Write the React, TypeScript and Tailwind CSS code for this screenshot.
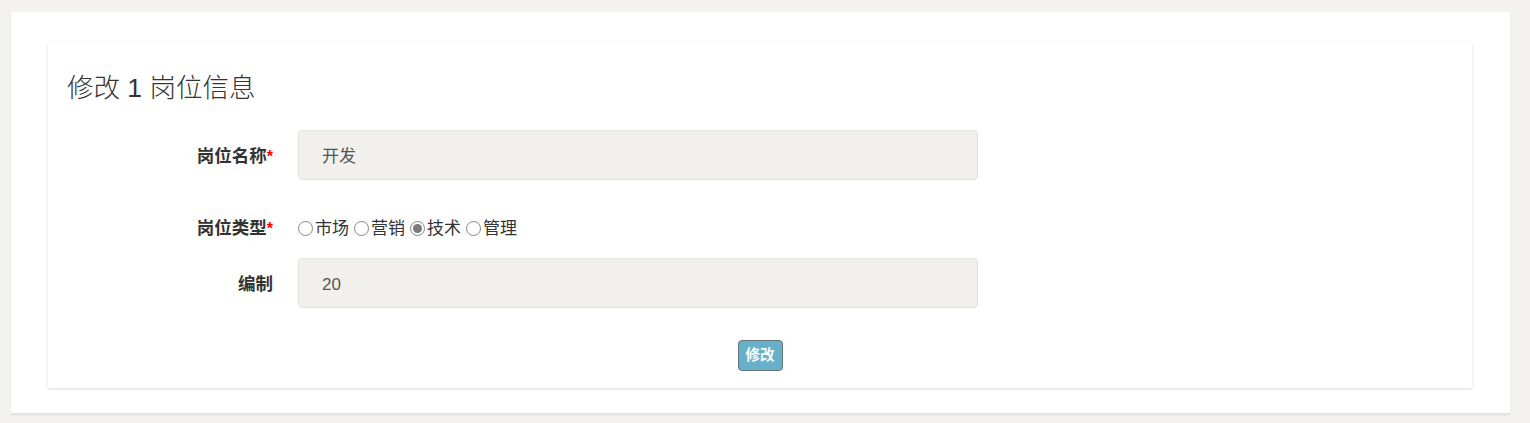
import { useState } from "react";

const font = { fontFamily: '"Liberation Sans", "Noto Sans CJK SC", sans-serif' };

const types = ["市场", "营销", "技术", "管理"];

const Radio = ({ checked }: { checked: boolean }) => (
  <span className="inline-flex w-[15px] h-[15px] rounded-full border border-[#858585] bg-white items-center justify-center shrink-0">
    {checked && <span className="w-[9px] h-[9px] rounded-full bg-[#7a7a7a]" />}
  </span>
);

const Label = ({ text, required }: { text: string; required?: boolean }) => (
  <div className="w-[226px] pr-[1px] pt-[3px] text-right text-[17.5px] font-bold text-[#333]">
    {text}
    {required && <span className="text-[#f00] text-[16px]">*</span>}
  </div>
);

export default function App() {
  const [kind, setKind] = useState("技术");

  return (
    <div className="min-h-screen bg-[#f3f2ef] pt-[12px]" style={font}>
      <div className="ml-[11px] w-[1499px] bg-white pt-[31px] pl-[37px] pr-[38px] pb-[25px] shadow-[0_2px_2px_rgba(0,0,0,0.08)]">
        <div className="bg-white shadow-[0_1px_3px_rgba(0,0,0,0.14)] pt-[30px] pb-[17px]">
          <h2 className="pl-[19px] text-[26.5px] leading-[30px] font-light text-[#333]">修改 1 岗位信息</h2>

          <form className="mt-[27px]" onSubmit={(e) => e.preventDefault()}>
            <div className="flex items-center">
              <Label text="岗位名称" required />
              <div className="ml-[24px] w-[680px] h-[50px] rounded-[4px] border border-[#e4e2df] bg-[#f2f0ed] pl-[23px] pt-[3px] flex items-center text-[17px] text-[#555]">
                开发
              </div>
            </div>

            <div className="flex items-center mt-[32px] h-[30px]">
              <Label text="岗位类型" required />
              <div className="ml-[24px] pt-[3px] flex items-center text-[17px] text-[#333]">
                {types.map((t, i) => (
                  <label
                    key={t}
                    onClick={() => setKind(t)}
                    className={`flex items-center gap-[2px] cursor-pointer ${i > 0 ? "ml-[5px]" : ""}`}
                  >
                    <Radio checked={kind === t} />
                    <span>{t}</span>
                  </label>
                ))}
              </div>
            </div>

            <div className="flex items-center mt-[16px]">
              <Label text="编制" />
              <div className="ml-[24px] w-[680px] h-[50px] rounded-[4px] border border-[#e4e2df] bg-[#f2f0ed] pl-[23px] pt-[3px] flex items-center text-[17px] text-[#555]">
                20
              </div>
            </div>

            <div className="flex justify-center mt-[32px]">
              <button
                type="submit"
                className="h-[31px] px-[7px] rounded-[4px] border border-[#66737a] bg-[#66b1c9] text-white text-[14.5px] font-bold"
              >
                修改
              </button>
            </div>
          </form>
        </div>
      </div>
    </div>
  );
}
